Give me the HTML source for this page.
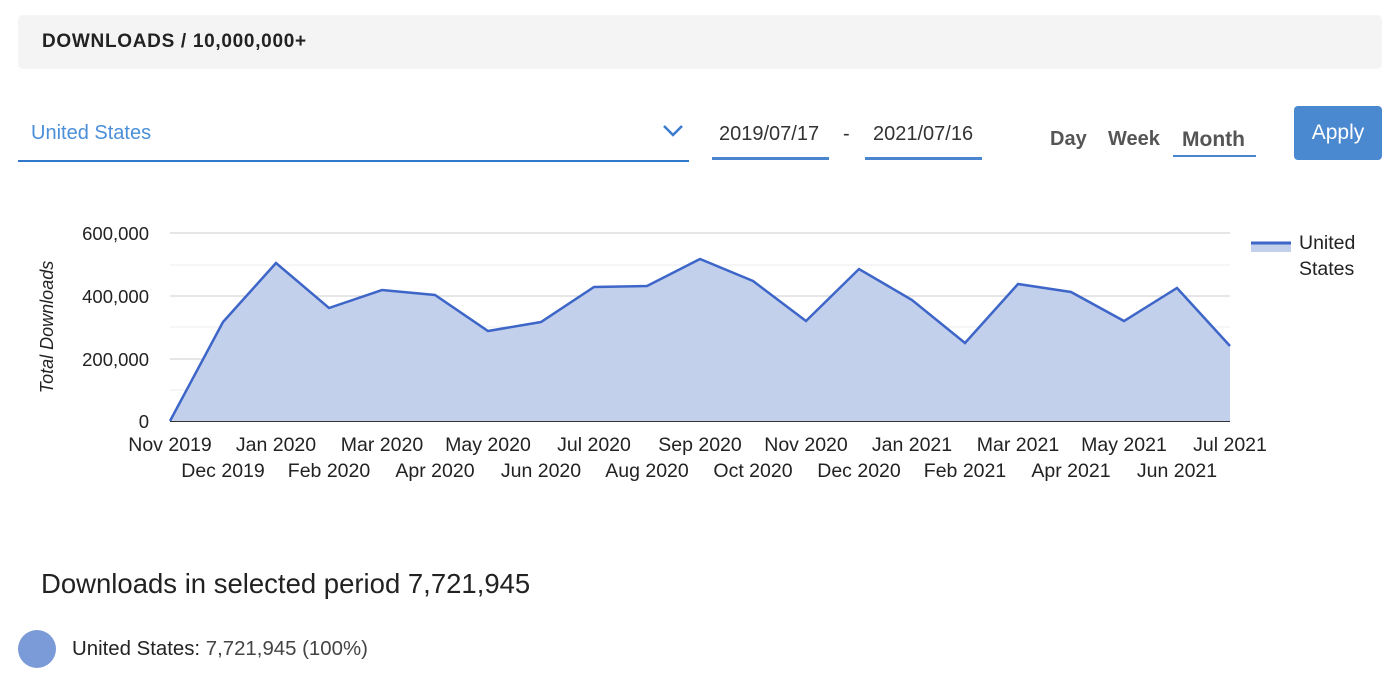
<!DOCTYPE html><html><head><style>
body{margin:0;width:1400px;height:677px;background:#fff;font-family:"Liberation Sans",Arial,sans-serif;position:relative;overflow:hidden}
.a{position:absolute}
</style></head><body>
<div class="a" style="left:18px;top:15px;width:1364px;height:54px;background:#f4f4f4;border-radius:5px"></div>
<div class="a" style="left:42px;top:31px;font-weight:bold;font-size:19px;color:#222;letter-spacing:0.7px">DOWNLOADS / 10,000,000+</div>
<div class="a" style="left:31px;top:122px;font-size:20px;color:#4a8fd8">United States</div>
<svg class="a" style="left:662px;top:124px" width="22" height="14"><path d="M2 2 L11 11 L20 2" stroke="#3a7bd0" stroke-width="2.5" fill="none"/></svg>
<div class="a" style="left:18px;top:160px;width:671px;height:2px;background:#2f78cc"></div>
<div class="a" style="left:719px;top:123px;font-size:20px;color:#333">2019/07/17</div>
<div class="a" style="left:712px;top:157px;width:117px;height:3px;background:#4a86cf"></div>
<div class="a" style="left:843px;top:123px;font-size:20px;color:#333">-</div>
<div class="a" style="left:873px;top:123px;font-size:20px;color:#333">2021/07/16</div>
<div class="a" style="left:865px;top:157px;width:117px;height:3px;background:#4a86cf"></div>
<div class="a" style="left:1050px;top:128px;font-size:20px;font-weight:bold;color:#555">Day</div>
<div class="a" style="left:1108px;top:128px;font-size:20px;font-weight:bold;color:#555">Week</div>
<div class="a" style="left:1182px;top:128px;font-size:21px;font-weight:bold;color:#555">Month</div>
<div class="a" style="left:1173px;top:155px;width:83px;height:2px;background:#4a86cf"></div>
<div class="a" style="left:1294px;top:106px;width:88px;height:54px;background:#4a88d0;border-radius:4px;color:#fff;font-size:21px;text-align:center;line-height:54px">Apply</div>
<svg class="a" style="left:0;top:0" width="1400" height="520" font-family="Liberation Sans, Arial, sans-serif">
<g stroke="#ececec" stroke-width="1"><line x1="170" x2="1230" y1="265" y2="265"/><line x1="170" x2="1230" y1="327" y2="327"/><line x1="170" x2="1230" y1="390" y2="390"/></g>
<g stroke="#ccc" stroke-width="1"><line x1="170" x2="1230" y1="233" y2="233"/><line x1="170" x2="1230" y1="296" y2="296"/><line x1="170" x2="1230" y1="359" y2="359"/></g>
<polygon fill="#c3d0ec" points="170,421 223,322 276,263 329,308 382,290 435,295 488,331 541,322 594,287 647,286 700,259 753,281 806,321 859,269 912,300 965,343 1018,284 1071,292 1124,321 1177,288 1230,346 1230,421"/>
<polyline fill="none" stroke="#3d66c8" stroke-width="2.5" points="170,421 223,322 276,263 329,308 382,290 435,295 488,331 541,322 594,287 647,286 700,259 753,281 806,321 859,269 912,300 965,343 1018,284 1071,292 1124,321 1177,288 1230,346"/>
<line x1="170" x2="1230" y1="421.5" y2="421.5" stroke="#333" stroke-width="1"/>
<g font-size="18.5" fill="#222" text-anchor="end"><text x="149" y="240">600,000</text><text x="149" y="303">400,000</text><text x="149" y="366">200,000</text><text x="149" y="428">0</text></g>
<text transform="translate(53,327) rotate(-90)" font-size="18" font-style="italic" text-anchor="middle" fill="#222">Total Downloads</text>
<g font-size="19.5" fill="#222" text-anchor="middle">
<text x="170" y="451">Nov 2019</text><text x="276" y="451">Jan 2020</text><text x="382" y="451">Mar 2020</text><text x="488" y="451">May 2020</text><text x="594" y="451">Jul 2020</text><text x="700" y="451">Sep 2020</text><text x="806" y="451">Nov 2020</text><text x="912" y="451">Jan 2021</text><text x="1018" y="451">Mar 2021</text><text x="1124" y="451">May 2021</text><text x="1230" y="451">Jul 2021</text>
<text x="223" y="477">Dec 2019</text><text x="329" y="477">Feb 2020</text><text x="435" y="477">Apr 2020</text><text x="541" y="477">Jun 2020</text><text x="647" y="477">Aug 2020</text><text x="753" y="477">Oct 2020</text><text x="859" y="477">Dec 2020</text><text x="965" y="477">Feb 2021</text><text x="1071" y="477">Apr 2021</text><text x="1177" y="477">Jun 2021</text>
</g>
<rect x="1251" y="242" width="40" height="10" fill="#c3d0ec"/><line x1="1251" x2="1291" y1="243" y2="243" stroke="#3d66c8" stroke-width="3"/>
<text x="1299" y="249" font-size="19.5" fill="#222">United</text><text x="1299" y="275" font-size="19.5" fill="#222">States</text>
</svg>
<div class="a" style="left:41px;top:568px;font-size:27.5px;color:#222">Downloads in selected period 7,721,945</div>
<div class="a" style="left:18px;top:630px;width:38px;height:38px;border-radius:50%;background:#7b9ad8"></div>
<div class="a" style="left:72px;top:638px;font-size:20.4px;color:#222">United States: <span style="color:#444">7,721,945 (100%)</span></div>
</body></html>
